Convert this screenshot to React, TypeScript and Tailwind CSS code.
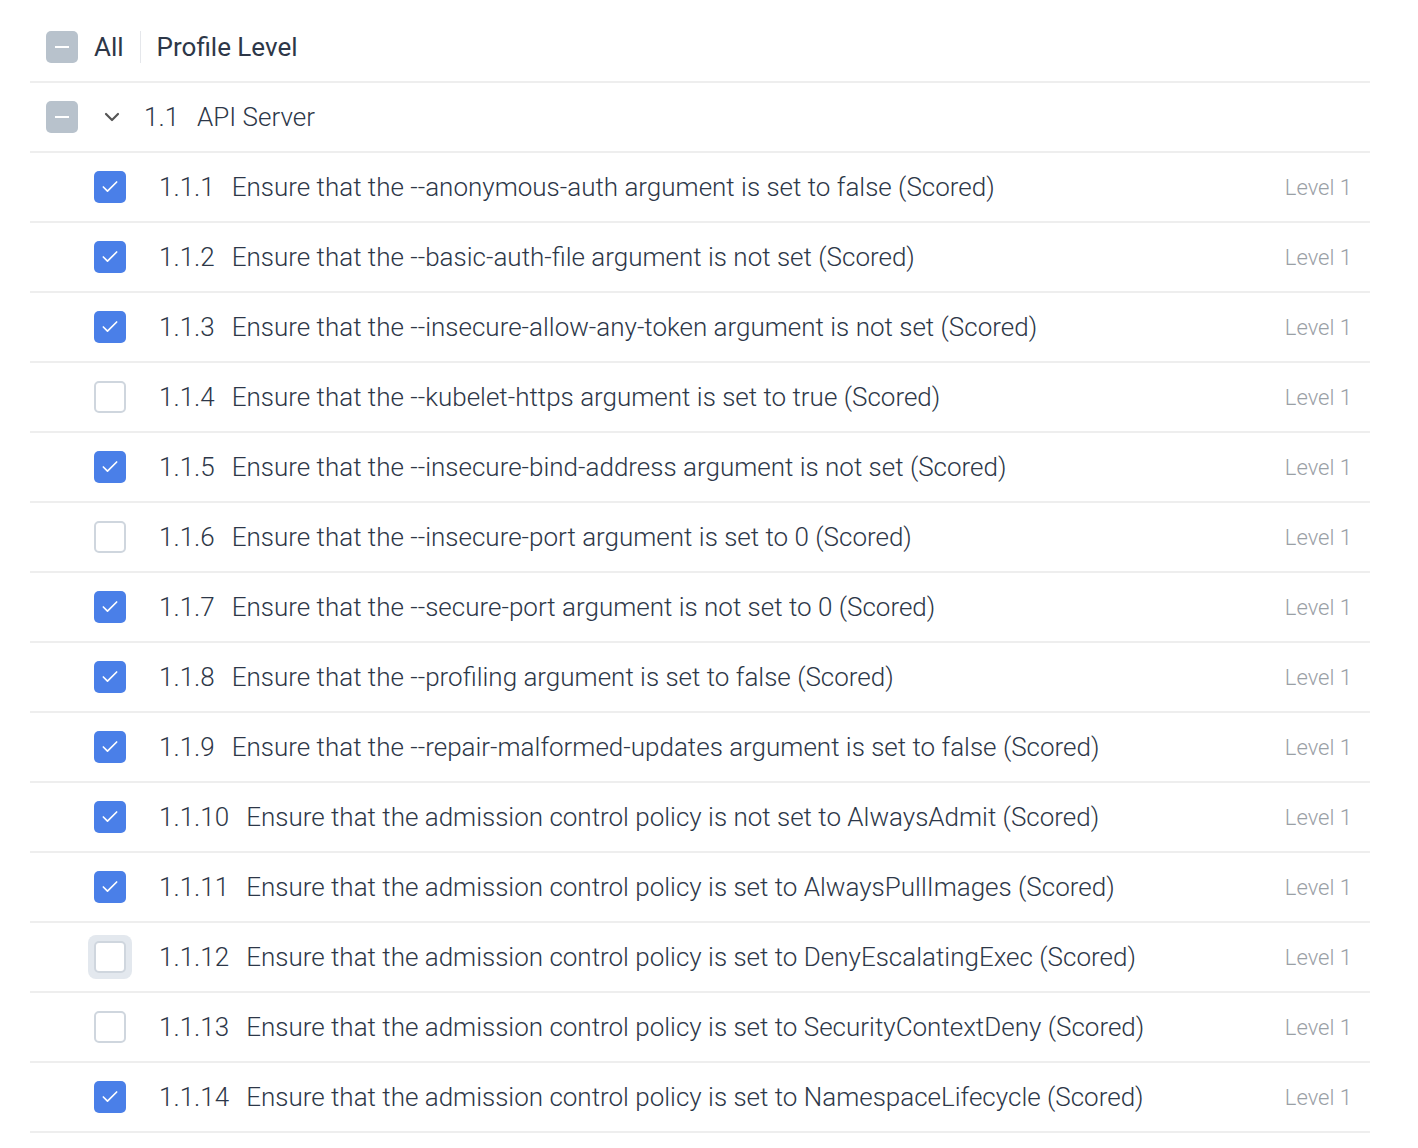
import { Check, ChevronDown } from 'lucide-react';

const items: [string, string, boolean][] = [
  ['1.1.1', 'Ensure that the --anonymous-auth argument is set to false (Scored)', true],
  ['1.1.2', 'Ensure that the --basic-auth-file argument is not set (Scored)', true],
  ['1.1.3', 'Ensure that the --insecure-allow-any-token argument is not set (Scored)', true],
  ['1.1.4', 'Ensure that the --kubelet-https argument is set to true (Scored)', false],
  ['1.1.5', 'Ensure that the --insecure-bind-address argument is not set (Scored)', true],
  ['1.1.6', 'Ensure that the --insecure-port argument is set to 0 (Scored)', false],
  ['1.1.7', 'Ensure that the --secure-port argument is not set to 0 (Scored)', true],
  ['1.1.8', 'Ensure that the --profiling argument is set to false (Scored)', true],
  ['1.1.9', 'Ensure that the --repair-malformed-updates argument is set to false (Scored)', true],
  ['1.1.10', 'Ensure that the admission control policy is not set to AlwaysAdmit (Scored)', true],
  ['1.1.11', 'Ensure that the admission control policy is set to AlwaysPullImages (Scored)', true],
  ['1.1.12', 'Ensure that the admission control policy is set to DenyEscalatingExec (Scored)', false],
  ['1.1.13', 'Ensure that the admission control policy is set to SecurityContextDeny (Scored)', false],
  ['1.1.14', 'Ensure that the admission control policy is set to NamespaceLifecycle (Scored)', true],
];

function Indeterminate() {
  return (
    <div className="w-8 h-8 rounded-[5px] bg-[#b8c2cc] flex items-center justify-center">
      <div className="w-[14px] h-[2px] bg-white" />
    </div>
  );
}

function Box({ checked, focus }: { checked: boolean; focus?: boolean }) {
  if (checked)
    return (
      <div className="w-8 h-8 rounded-[5px] bg-[#4a7fe8] flex items-center justify-center">
        <Check className="w-5 h-5 text-white" strokeWidth={2} />
      </div>
    );
  return (
    <div className={`rounded-[8px] flex items-center justify-center ${focus ? 'bg-[#e3e8ee] w-11 h-11 -m-1.5' : 'w-8 h-8'}`}>
      <div className="w-8 h-8 rounded-[5px] bg-white border-2 border-[#cfd6de]" />
    </div>
  );
}

export default function App() {
  return (
    <div className="bg-white min-h-[1148px] pt-[13px] px-[30px] text-[#2d3748]" style={{ fontFamily: 'Roboto, sans-serif' }}>
      <div className="w-[1340px]">
        <div className="h-[70px] flex items-center pl-4 border-b-2 border-[#eeeeee]">
          <Indeterminate />
          <span className="ml-4 text-[26px]">All</span>
          <div className="mx-4 w-px h-8 bg-[#e5e7eb]" />
          <span className="text-[26px]">Profile Level</span>
        </div>
        <div className="h-[70px] flex items-center pl-4 border-b-2 border-[#eeeeee]">
          <Indeterminate />
          <ChevronDown className="ml-[22px] w-6 h-6 text-[#555]" strokeWidth={2.2} />
          <span className="ml-[20px] text-[26px] font-light">1.1</span>
          <span className="ml-[18px] text-[26px] font-light">API Server</span>
        </div>
        {items.map(([n, t, c]) => (
          <div key={n} className="h-[70px] flex items-center pl-16 pr-[18px] border-b-2 border-[#eeeeee]">
            <Box checked={c} focus={n === '1.1.12'} />
            <span className="ml-[33px] text-[26px] font-light">{n}</span>
            <span className="ml-[17px] text-[26px] font-light flex-1">{t}</span>
            <span className="text-[22px] font-light text-[#9aa0a6]">Level 1</span>
          </div>
        ))}
      </div>
    </div>
  );
}
